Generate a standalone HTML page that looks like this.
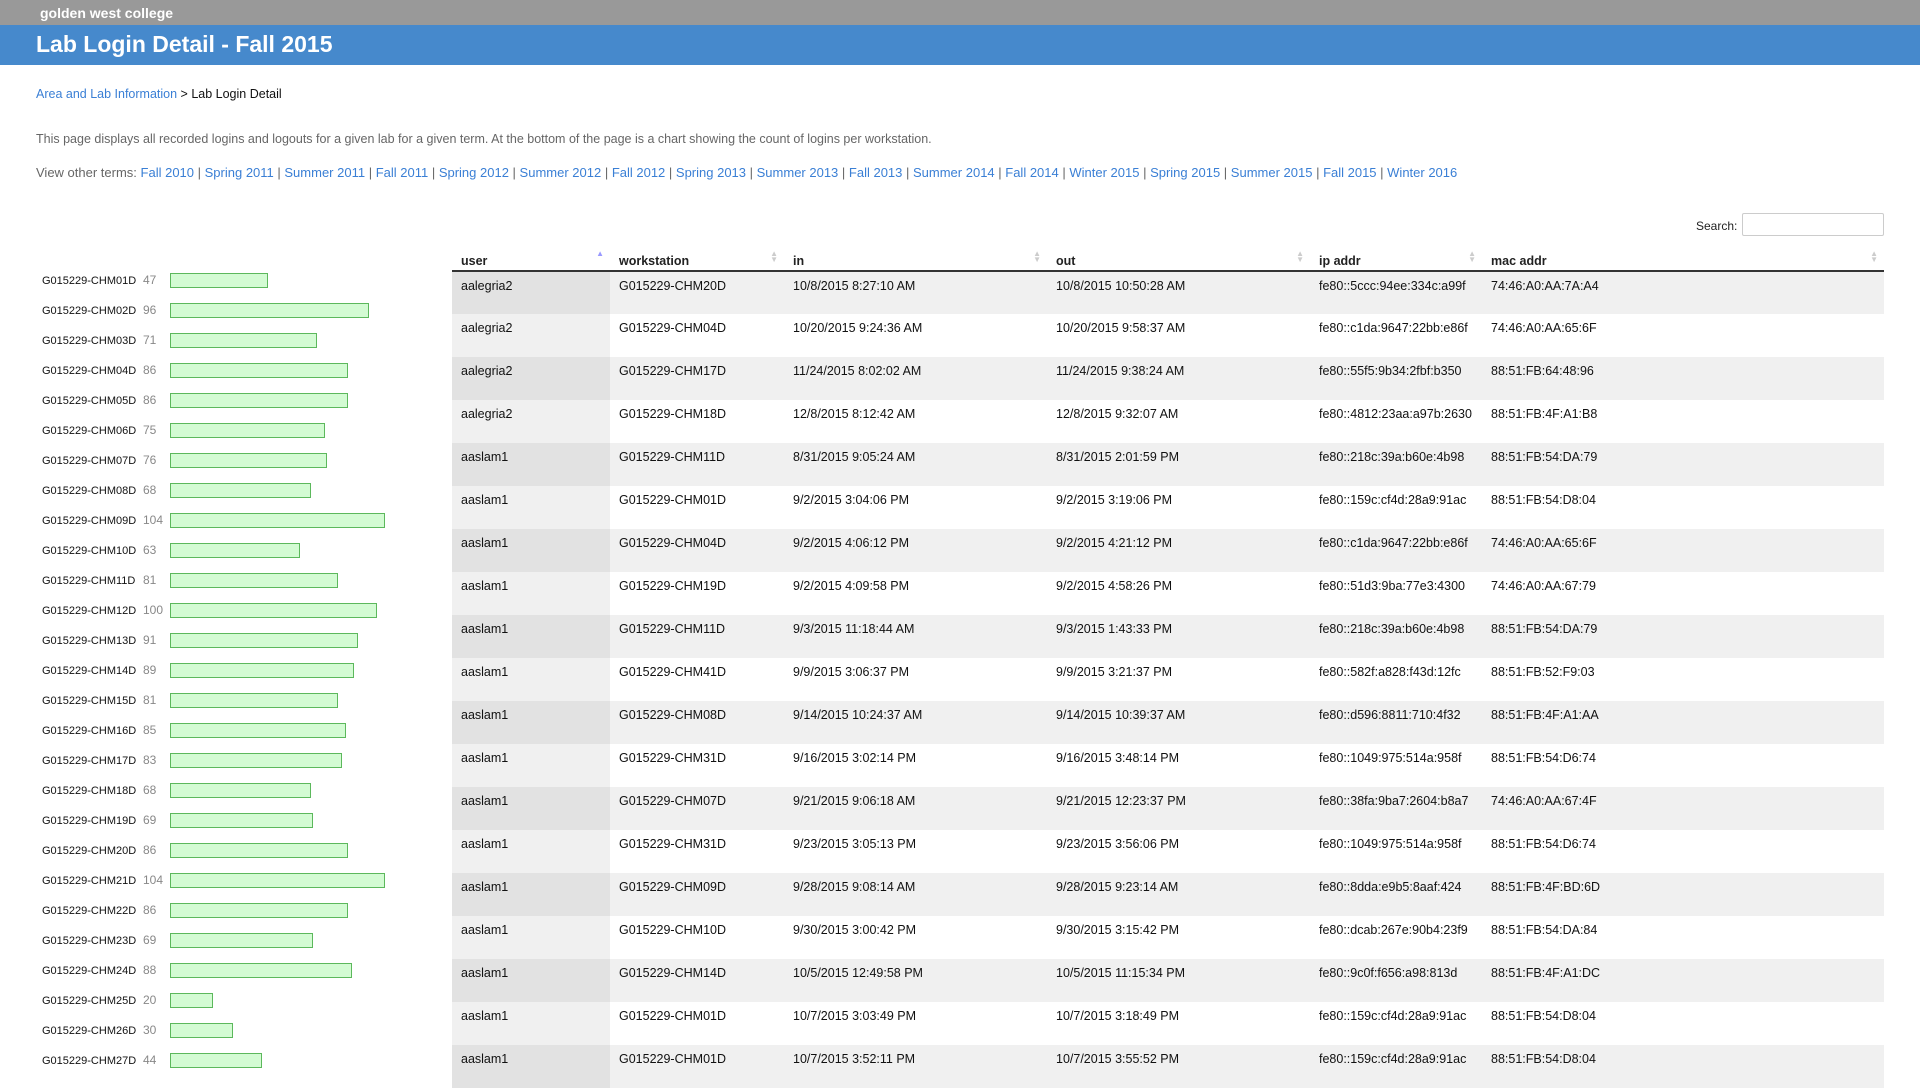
<!DOCTYPE html>
<html><head><meta charset="utf-8">
<style>
*{margin:0;padding:0;box-sizing:border-box}
body{width:1920px;height:1080px;overflow:hidden;background:#fff;font-family:"Liberation Sans",Arial,sans-serif;color:#222;position:relative}
.top{position:absolute;left:0;top:0;width:1920px;height:25px;background:#999;color:#fff;font-size:14px;font-weight:bold;padding:5px 0 0 40px}
.hdr{position:absolute;left:0;top:25px;width:1920px;height:40px;background:#4689cc;color:#fff;font-size:23px;font-weight:bold;padding:6px 0 0 36px}
a{color:#3a7fd5;text-decoration:none}
.bc{position:absolute;left:36px;top:87px;font-size:12.5px;color:#111}
.desc{position:absolute;left:36px;top:132px;font-size:12.5px;color:#666}
.terms{position:absolute;left:36px;top:165px;font-size:13px;color:#666;white-space:nowrap}
.search{position:absolute;left:1696px;top:219px;font-size:12px;color:#222}
.sinput{position:absolute;left:1742px;top:213px;width:142px;height:23px;border:1px solid #ccc;border-radius:2px}
.chart{position:absolute;left:42px;top:273px}
.cr{position:relative;height:30px;white-space:nowrap}
.cr .l{position:absolute;left:0;top:2px;font-size:11px;color:#111;white-space:nowrap}
.cr .n{position:absolute;left:101px;top:0;font-size:12px;color:#888}
.cr .b{position:absolute;left:128px;top:0;height:15px;background:#d3fbd3;border:1px solid #5cb85c}
table{position:absolute;left:452px;top:250px;width:1432px;border-collapse:collapse;font-size:12.5px}
th{height:21px;text-align:left;font-weight:bold;font-size:12.5px;padding:4px 0 0 9px;border-bottom:2px solid #333;position:relative;vertical-align:top}
th .s{position:absolute;right:6px;top:1px;font-size:8px;line-height:6px;color:#ccc}
td{height:43px;vertical-align:top;padding:7px 0 0 9px;color:#111}
tr.o td{background:#f0f0f0}
tr.o td:first-child{background:#e2e2e2}
tr.e td{background:#fff}
tr.e td:first-child{background:#f0f0f0}
</style></head><body>
<div class="top">golden west college</div>
<div class="hdr">Lab Login Detail - Fall 2015</div>
<div class="bc"><a>Area and Lab Information</a> &gt; Lab Login Detail</div>
<div class="desc">This page displays all recorded logins and logouts for a given lab for a given term. At the bottom of the page is a chart showing the count of logins per workstation.</div>
<div class="terms">View other terms: <a>Fall 2010</a> | <a>Spring 2011</a> | <a>Summer 2011</a> | <a>Fall 2011</a> | <a>Spring 2012</a> | <a>Summer 2012</a> | <a>Fall 2012</a> | <a>Spring 2013</a> | <a>Summer 2013</a> | <a>Fall 2013</a> | <a>Summer 2014</a> | <a>Fall 2014</a> | <a>Winter 2015</a> | <a>Spring 2015</a> | <a>Summer 2015</a> | <a>Fall 2015</a> | <a>Winter 2016</a></div>
<div class="search">Search:</div><div class="sinput"></div>

<div class="chart">
<div class="cr"><span class="l">G015229-CHM01D</span><span class="n">47</span><span class="b" style="width:98px"></span></div>
<div class="cr"><span class="l">G015229-CHM02D</span><span class="n">96</span><span class="b" style="width:199px"></span></div>
<div class="cr"><span class="l">G015229-CHM03D</span><span class="n">71</span><span class="b" style="width:147px"></span></div>
<div class="cr"><span class="l">G015229-CHM04D</span><span class="n">86</span><span class="b" style="width:178px"></span></div>
<div class="cr"><span class="l">G015229-CHM05D</span><span class="n">86</span><span class="b" style="width:178px"></span></div>
<div class="cr"><span class="l">G015229-CHM06D</span><span class="n">75</span><span class="b" style="width:155px"></span></div>
<div class="cr"><span class="l">G015229-CHM07D</span><span class="n">76</span><span class="b" style="width:157px"></span></div>
<div class="cr"><span class="l">G015229-CHM08D</span><span class="n">68</span><span class="b" style="width:141px"></span></div>
<div class="cr"><span class="l">G015229-CHM09D</span><span class="n">104</span><span class="b" style="width:215px"></span></div>
<div class="cr"><span class="l">G015229-CHM10D</span><span class="n">63</span><span class="b" style="width:130px"></span></div>
<div class="cr"><span class="l">G015229-CHM11D</span><span class="n">81</span><span class="b" style="width:168px"></span></div>
<div class="cr"><span class="l">G015229-CHM12D</span><span class="n">100</span><span class="b" style="width:207px"></span></div>
<div class="cr"><span class="l">G015229-CHM13D</span><span class="n">91</span><span class="b" style="width:188px"></span></div>
<div class="cr"><span class="l">G015229-CHM14D</span><span class="n">89</span><span class="b" style="width:184px"></span></div>
<div class="cr"><span class="l">G015229-CHM15D</span><span class="n">81</span><span class="b" style="width:168px"></span></div>
<div class="cr"><span class="l">G015229-CHM16D</span><span class="n">85</span><span class="b" style="width:176px"></span></div>
<div class="cr"><span class="l">G015229-CHM17D</span><span class="n">83</span><span class="b" style="width:172px"></span></div>
<div class="cr"><span class="l">G015229-CHM18D</span><span class="n">68</span><span class="b" style="width:141px"></span></div>
<div class="cr"><span class="l">G015229-CHM19D</span><span class="n">69</span><span class="b" style="width:143px"></span></div>
<div class="cr"><span class="l">G015229-CHM20D</span><span class="n">86</span><span class="b" style="width:178px"></span></div>
<div class="cr"><span class="l">G015229-CHM21D</span><span class="n">104</span><span class="b" style="width:215px"></span></div>
<div class="cr"><span class="l">G015229-CHM22D</span><span class="n">86</span><span class="b" style="width:178px"></span></div>
<div class="cr"><span class="l">G015229-CHM23D</span><span class="n">69</span><span class="b" style="width:143px"></span></div>
<div class="cr"><span class="l">G015229-CHM24D</span><span class="n">88</span><span class="b" style="width:182px"></span></div>
<div class="cr"><span class="l">G015229-CHM25D</span><span class="n">20</span><span class="b" style="width:43px"></span></div>
<div class="cr"><span class="l">G015229-CHM26D</span><span class="n">30</span><span class="b" style="width:63px"></span></div>
<div class="cr"><span class="l">G015229-CHM27D</span><span class="n">44</span><span class="b" style="width:92px"></span></div>
</div>

<table>
<colgroup><col style="width:158px"><col style="width:174px"><col style="width:263px"><col style="width:263px"><col style="width:172px"><col></colgroup>
<tr><th>user<span class="s" style="color:#99f">▲</span></th><th>workstation<span class="s">▲<br>▼</span></th><th>in<span class="s">▲<br>▼</span></th><th>out<span class="s">▲<br>▼</span></th><th>ip addr<span class="s">▲<br>▼</span></th><th>mac addr<span class="s">▲<br>▼</span></th></tr>
<tr class="o"><td>aalegria2</td><td>G015229-CHM20D</td><td>10/8/2015 8:27:10 AM</td><td>10/8/2015 10:50:28 AM</td><td>fe80::5ccc:94ee:334c:a99f</td><td>74:46:A0:AA:7A:A4</td></tr>
<tr class="e"><td>aalegria2</td><td>G015229-CHM04D</td><td>10/20/2015 9:24:36 AM</td><td>10/20/2015 9:58:37 AM</td><td>fe80::c1da:9647:22bb:e86f</td><td>74:46:A0:AA:65:6F</td></tr>
<tr class="o"><td>aalegria2</td><td>G015229-CHM17D</td><td>11/24/2015 8:02:02 AM</td><td>11/24/2015 9:38:24 AM</td><td>fe80::55f5:9b34:2fbf:b350</td><td>88:51:FB:64:48:96</td></tr>
<tr class="e"><td>aalegria2</td><td>G015229-CHM18D</td><td>12/8/2015 8:12:42 AM</td><td>12/8/2015 9:32:07 AM</td><td>fe80::4812:23aa:a97b:2630</td><td>88:51:FB:4F:A1:B8</td></tr>
<tr class="o"><td>aaslam1</td><td>G015229-CHM11D</td><td>8/31/2015 9:05:24 AM</td><td>8/31/2015 2:01:59 PM</td><td>fe80::218c:39a:b60e:4b98</td><td>88:51:FB:54:DA:79</td></tr>
<tr class="e"><td>aaslam1</td><td>G015229-CHM01D</td><td>9/2/2015 3:04:06 PM</td><td>9/2/2015 3:19:06 PM</td><td>fe80::159c:cf4d:28a9:91ac</td><td>88:51:FB:54:D8:04</td></tr>
<tr class="o"><td>aaslam1</td><td>G015229-CHM04D</td><td>9/2/2015 4:06:12 PM</td><td>9/2/2015 4:21:12 PM</td><td>fe80::c1da:9647:22bb:e86f</td><td>74:46:A0:AA:65:6F</td></tr>
<tr class="e"><td>aaslam1</td><td>G015229-CHM19D</td><td>9/2/2015 4:09:58 PM</td><td>9/2/2015 4:58:26 PM</td><td>fe80::51d3:9ba:77e3:4300</td><td>74:46:A0:AA:67:79</td></tr>
<tr class="o"><td>aaslam1</td><td>G015229-CHM11D</td><td>9/3/2015 11:18:44 AM</td><td>9/3/2015 1:43:33 PM</td><td>fe80::218c:39a:b60e:4b98</td><td>88:51:FB:54:DA:79</td></tr>
<tr class="e"><td>aaslam1</td><td>G015229-CHM41D</td><td>9/9/2015 3:06:37 PM</td><td>9/9/2015 3:21:37 PM</td><td>fe80::582f:a828:f43d:12fc</td><td>88:51:FB:52:F9:03</td></tr>
<tr class="o"><td>aaslam1</td><td>G015229-CHM08D</td><td>9/14/2015 10:24:37 AM</td><td>9/14/2015 10:39:37 AM</td><td>fe80::d596:8811:710:4f32</td><td>88:51:FB:4F:A1:AA</td></tr>
<tr class="e"><td>aaslam1</td><td>G015229-CHM31D</td><td>9/16/2015 3:02:14 PM</td><td>9/16/2015 3:48:14 PM</td><td>fe80::1049:975:514a:958f</td><td>88:51:FB:54:D6:74</td></tr>
<tr class="o"><td>aaslam1</td><td>G015229-CHM07D</td><td>9/21/2015 9:06:18 AM</td><td>9/21/2015 12:23:37 PM</td><td>fe80::38fa:9ba7:2604:b8a7</td><td>74:46:A0:AA:67:4F</td></tr>
<tr class="e"><td>aaslam1</td><td>G015229-CHM31D</td><td>9/23/2015 3:05:13 PM</td><td>9/23/2015 3:56:06 PM</td><td>fe80::1049:975:514a:958f</td><td>88:51:FB:54:D6:74</td></tr>
<tr class="o"><td>aaslam1</td><td>G015229-CHM09D</td><td>9/28/2015 9:08:14 AM</td><td>9/28/2015 9:23:14 AM</td><td>fe80::8dda:e9b5:8aaf:424</td><td>88:51:FB:4F:BD:6D</td></tr>
<tr class="e"><td>aaslam1</td><td>G015229-CHM10D</td><td>9/30/2015 3:00:42 PM</td><td>9/30/2015 3:15:42 PM</td><td>fe80::dcab:267e:90b4:23f9</td><td>88:51:FB:54:DA:84</td></tr>
<tr class="o"><td>aaslam1</td><td>G015229-CHM14D</td><td>10/5/2015 12:49:58 PM</td><td>10/5/2015 11:15:34 PM</td><td>fe80::9c0f:f656:a98:813d</td><td>88:51:FB:4F:A1:DC</td></tr>
<tr class="e"><td>aaslam1</td><td>G015229-CHM01D</td><td>10/7/2015 3:03:49 PM</td><td>10/7/2015 3:18:49 PM</td><td>fe80::159c:cf4d:28a9:91ac</td><td>88:51:FB:54:D8:04</td></tr>
<tr class="o"><td>aaslam1</td><td>G015229-CHM01D</td><td>10/7/2015 3:52:11 PM</td><td>10/7/2015 3:55:52 PM</td><td>fe80::159c:cf4d:28a9:91ac</td><td>88:51:FB:54:D8:04</td></tr>
</table>
</body></html>
